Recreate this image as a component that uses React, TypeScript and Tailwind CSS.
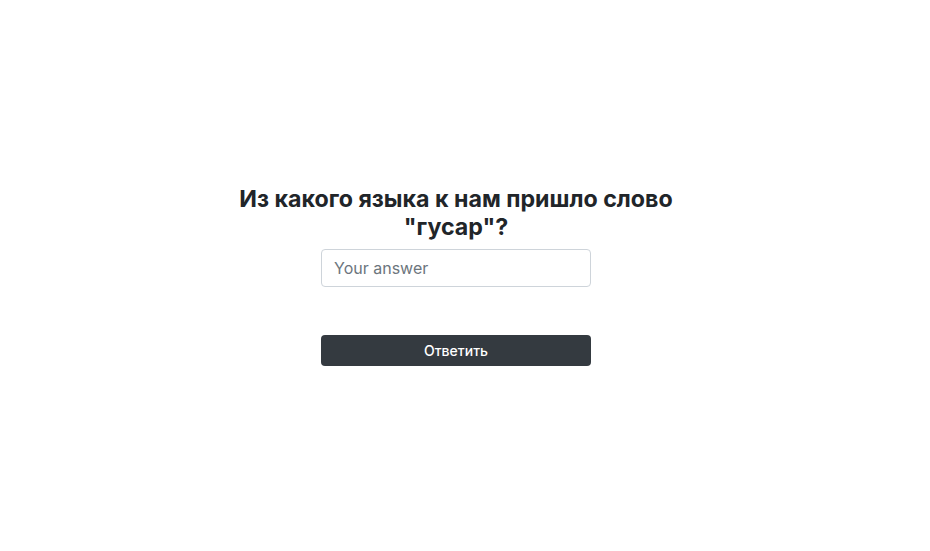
export default function App() {
  return (
    <div className="w-[912px] h-[551px] flex flex-col items-center justify-center font-['Inter','Noto_Sans',sans-serif] bg-white">
      <h2 className="w-[460px] text-center text-[23.2px] leading-[28px] font-bold text-[#212529]">
        Из какого языка к нам пришло слово "гусар"?
      </h2>
      <input
        type="text"
        placeholder="Your answer"
        className="mt-[8px] w-[270px] h-[38px] px-3 text-[16px] border border-[#ced4da] rounded-[4px] text-[#212529] placeholder:text-[#6c757d] outline-none"
      />
      <button className="mt-[48px] w-[270px] h-[31px] rounded-[4px] bg-[#343a40] text-white text-[14px] font-medium">
        Ответить
      </button>
    </div>
  );
}
